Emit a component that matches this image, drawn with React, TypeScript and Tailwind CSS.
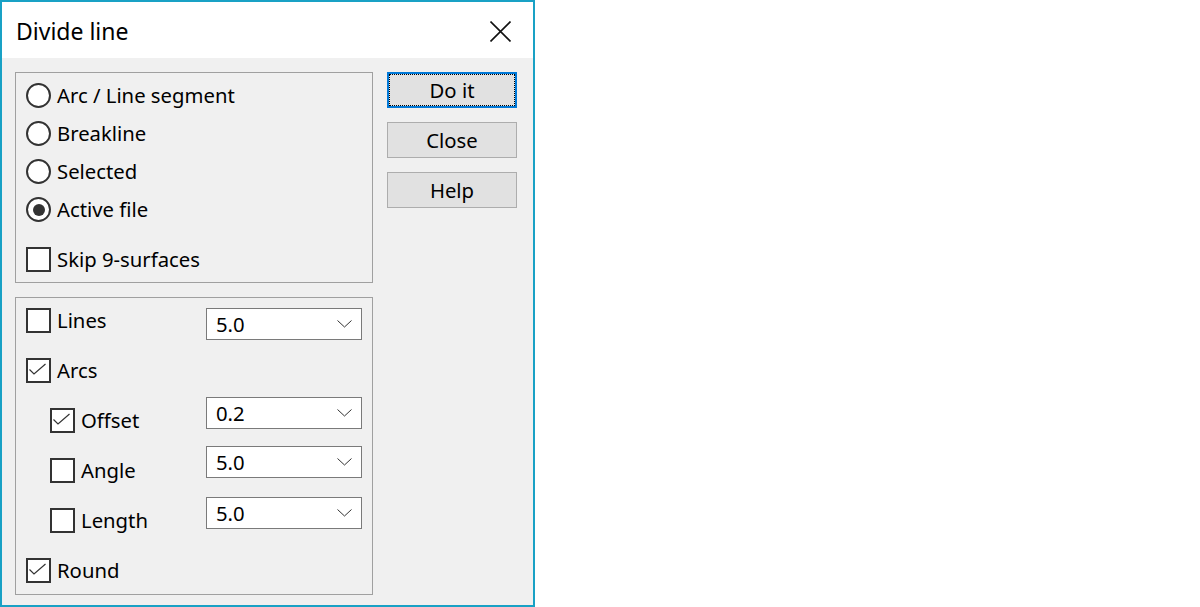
import React from "react";

const font = { fontFamily: '"Noto Sans", "Open Sans", sans-serif' };

const Radio = ({ label, checked }: { label: string; checked?: boolean }) => (
  <div className="flex items-center gap-[6px] h-[25px]">
    <div className="size-[25px] rounded-full border-2 border-[#333] bg-white flex items-center justify-center">
      {checked && <div className="size-[12px] rounded-full bg-[#333]" />}
    </div>
    <span className="text-[20.3px] leading-none text-black">{label}</span>
  </div>
);

const Check = ({ label, checked }: { label: string; checked?: boolean }) => (
  <div className="flex items-center gap-[6px] h-[25px]">
    <div className="size-[25px] border-2 border-[#333] bg-white">
      {checked && (
        <svg width="21" height="21" viewBox="0 0 21 21">
          <path d="M1.5 9.5 L6 14 L17.5 4" fill="none" stroke="#333" strokeWidth="1.2" />
        </svg>
      )}
    </div>
    <span className="text-[20.3px] leading-none text-black">{label}</span>
  </div>
);

const Combo = ({ value, className }: { value: string; className?: string }) => (
  <div className={`w-[156px] h-[32px] border border-[#7a7a7a] bg-white flex items-center justify-between pl-[9px] pr-[9px] ${className ?? ""}`}>
    <span className="text-[20.3px] leading-none text-black">{value}</span>
    <svg width="15" height="8" viewBox="0 0 15 8">
      <path d="M0.5 0.5 L7.5 7 L14.5 0.5" fill="none" stroke="#333" strokeWidth="1" />
    </svg>
  </div>
);

const Button = ({ label, focused }: { label: string; focused?: boolean }) => (
  <div
    className={`h-[36px] bg-[#e1e1e1] flex items-center justify-center ${
      focused ? "border-2 border-[#0078d7]" : "border border-[#adadad]"
    }`}
  >
    <div
      className={`w-full h-full flex items-center justify-center ${
        focused ? "border border-dotted border-black" : ""
      }`}
    >
      <span className="text-[20.3px] leading-none text-black">{label}</span>
    </div>
  </div>
);

export default function App() {
  return (
    <div className="min-h-screen bg-white" style={font}>
      <div className="w-[535px] h-[607px] border-2 border-[#19a1c5] bg-[#f0f0f0] flex flex-col">
        <div className="h-[56px] bg-white flex items-center justify-between pl-[14px] pr-[22px] pt-[2px]">
          <span className="text-[23px] text-black">Divide line</span>
          <svg width="21" height="21" viewBox="0 0 21 21">
            <path d="M0.5 0.5 L20.5 20.5 M20.5 0.5 L0.5 20.5" stroke="#111" strokeWidth="1.6" />
          </svg>
        </div>

        <div className="flex-1 flex gap-[14px] pl-[13px] pt-[14px]">
          <div className="w-[358px] flex flex-col gap-[14px]">
            <div className="h-[211px] border border-[#a0a0a0] pl-[10px] pt-[10px] flex flex-col">
              <div className="flex flex-col gap-[13px]">
                <Radio label="Arc / Line segment" />
                <Radio label="Breakline" />
                <Radio label="Selected" />
                <Radio label="Active file" checked />
              </div>
              <div className="mt-[25px]">
                <Check label="Skip 9-surfaces" />
              </div>
            </div>

            <div className="h-[298px] border border-[#a0a0a0] pl-[10px] pt-[10px] flex flex-col gap-[25px]">
              <div className="flex items-start h-[25px]">
                <div className="w-[180px]">
                  <Check label="Lines" />
                </div>
                <Combo value="5.0" />
              </div>
              <div className="flex items-start h-[25px]">
                <Check label="Arcs" checked />
              </div>
              <div className="flex items-start h-[25px]">
                <div className="w-[180px] pl-[24px]">
                  <Check label="Offset" checked />
                </div>
                <Combo value="0.2" className="-mt-[11px]" />
              </div>
              <div className="flex items-start h-[25px]">
                <div className="w-[180px] pl-[24px]">
                  <Check label="Angle" />
                </div>
                <Combo value="5.0" className="-mt-[12px]" />
              </div>
              <div className="flex items-start h-[25px]">
                <div className="w-[180px] pl-[24px]">
                  <Check label="Length" />
                </div>
                <Combo value="5.0" className="-mt-[11px]" />
              </div>
              <div className="flex items-start h-[25px]">
                <Check label="Round" checked />
              </div>
            </div>
          </div>

          <div className="w-[130px] flex flex-col gap-[14px]">
            <Button label="Do it" focused />
            <Button label="Close" />
            <Button label="Help" />
          </div>
        </div>
      </div>
    </div>
  );
}
